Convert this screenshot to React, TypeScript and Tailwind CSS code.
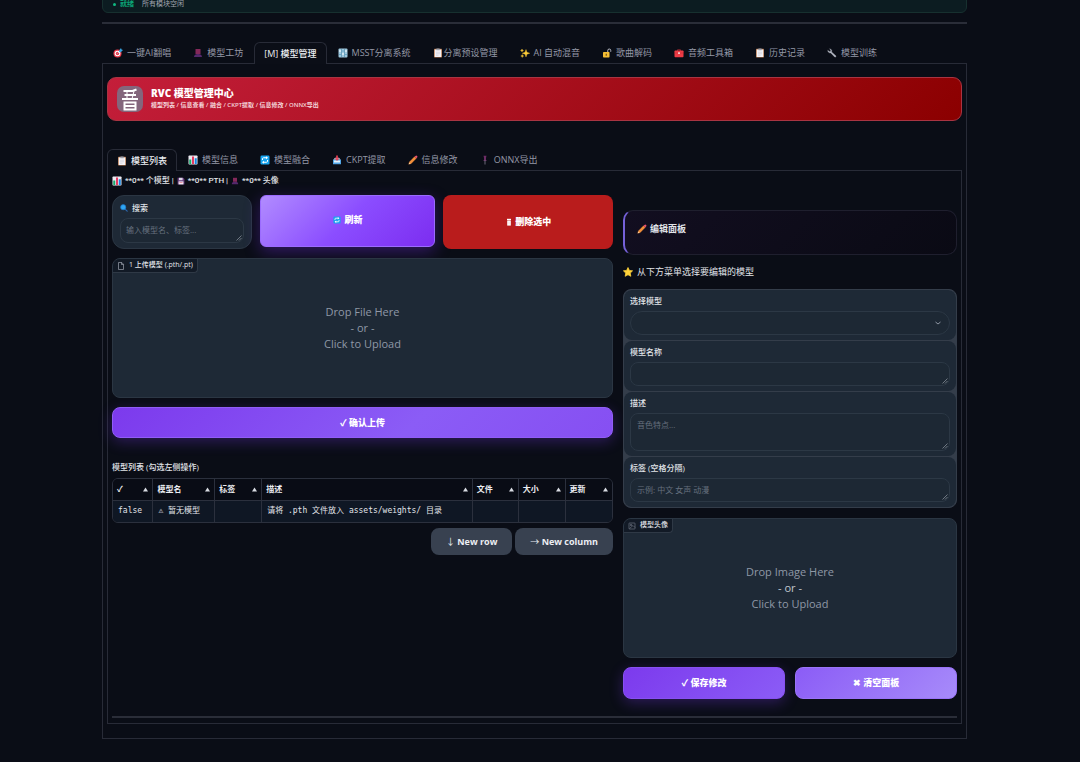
import React from "react";

type IconName =
  | "target" | "bust" | "mixer" | "clipboard" | "sparkles" | "unlock" | "toolbox"
  | "wrench" | "chart" | "refresh" | "inbox" | "pencil" | "pin" | "floppy"
  | "search" | "star" | "trash";

const shapes: Record<IconName, React.ReactNode> = {
  target: (
    <>
      <circle cx="9" cy="11" r="8" fill="#e5384a" />
      <circle cx="9" cy="11" r="5.6" fill="#fff" />
      <circle cx="9" cy="11" r="3.4" fill="#e5384a" />
      <path d="M9 11 16 4" stroke="#c8d4e6" strokeWidth="1.8" />
      <path d="M12 5 16 0l1 3 3 1-4.500 4.500-3-.3z" fill="#38a3e0" />
    </>
  ),
  bust: (
    <>
      <path d="M5 2h10v10H5z" fill="#84285a" />
      <path d="M2 18c0-4 3-6 8-6s8 2 8 6z" fill="#55286c" />
    </>
  ),
  mixer: (
    <>
      <rect x="1" y="1" width="18" height="18" rx="2" fill="#9fc9df" />
      <path d="M7 2v16M13 2v16" stroke="#4c88a8" strokeWidth="1.200" />
      <path d="M2.500 6h3M8.500 12h3M14.500 6h3" stroke="#f4fbff" strokeWidth="3" />
      <path d="M2.500 13h3M8.500 6h3M14.500 13h3" stroke="#5b9cc0" strokeWidth="2" />
    </>
  ),
  clipboard: (
    <>
      <rect x="2" y="1.500" width="16" height="17.500" rx="1.500" fill="#b9794f" />
      <rect x="3.500" y="3" width="13" height="15" fill="#f3f1f5" />
      <rect x="6.500" y="1" width="7" height="3.500" rx="1" fill="#9aa0ad" />
      <path d="M6 8.500h8M6 11.500h8M6 14.500h5" stroke="#c2c2d0" strokeWidth="1" />
    </>
  ),
  sparkles: (
    <path
      d="M12 3l1.900 5.600L19.500 10.500l-5.600 1.900L12 18l-1.900-5.600L4.500 10.500l5.600-1.900zM4 2l.8 2.200L7 5l-2.200.8L4 8l-.8-2.200L1 5l2.200-.8zM4.500 13l.8 2.200 2.200.8-2.200.8-.8 2.200-.8-2.200-2.200-.8 2.200-.8z"
      fill="#fccc38"
      stroke="#fccc38"
      strokeWidth=".7"
    />
  ),
  unlock: (
    <>
      <path d="M11.500 9V5a3 3 0 0 1 6 0V7.500" fill="none" stroke="#c9ccd6" strokeWidth="1.800" />
      <rect x="2" y="8" width="13" height="11" rx="1.500" fill="#f4bd33" />
      <path d="M8.500 11.500v4" stroke="#5c4520" strokeWidth="2.200" />
    </>
  ),
  toolbox: (
    <>
      <path d="M7 6V3.500h6V6" fill="none" stroke="#a52834" strokeWidth="1.600" />
      <rect x="1" y="5" width="18" height="13.500" rx="1.500" fill="#ee3b45" />
      <path d="M1 10h18" stroke="#c92f3a" strokeWidth="1.200" />
      <rect x="8" y="8.500" width="4" height="3.500" fill="#f6c5c8" />
    </>
  ),
  wrench: (
    <path
      d="M7.800 2.300a5 5 0 0 1 1.500 5.600l8.400 7.700a1.700 1.700 0 0 1-2.300 2.400L7.500 9.800A5 5 0 0 1 1.500 4.500l3.200 2.600 2.500-.6.200-2.500L5 1.500z"
      fill="#b3b6c2"
      stroke="#b3b6c2"
      strokeWidth=".6"
    />
  ),
  chart: (
    <>
      <rect x="1" y="1" width="18" height="18" rx="1.500" fill="#eceaf2" />
      <path d="M4.500 18V9" stroke="#16a86b" strokeWidth="4" />
      <path d="M10 18V3" stroke="#e63960" strokeWidth="4" />
      <path d="M15.500 18V6.500" stroke="#1687df" strokeWidth="4" />
    </>
  ),
  refresh: (
    <>
      <rect x="1" y="1" width="18" height="18" rx="2.500" fill="#16a4ef" />
      <path d="M5 10V7.500A2 2 0 0 1 7 5.500h6M15 10v2.500a2 2 0 0 1-2 2H7" fill="none" stroke="#fff" strokeWidth="2" />
      <path d="M12 2.500l4 3-4 3zM8 11.500l-4 3 4 3z" fill="#fff" />
    </>
  ),
  inbox: (
    <>
      <path d="M2 9h16v9.500H2z" fill="#53a6e6" />
      <path d="M3 9 6 5.500h8L17 9z" fill="#c9e4f5" />
      <path d="M4 11h12v4H4z" fill="#e3f2fb" />
      <path d="M10 1v6" stroke="#e93d52" strokeWidth="3.400" />
      <path d="M5.500 6.500h9L10 12z" fill="#e93d52" />
    </>
  ),
  pencil: (
    <>
      <path d="M1.500 18.500l1.200-4.600L12.900 3.700l3.400 3.400L6.100 17.300z" fill="#f4903a" stroke="#f4903a" strokeWidth=".6" />
      <path d="M12.900 3.700l1.900-1.900a2.400 2.400 0 0 1 3.400 3.400l-1.900 1.900z" fill="#e9536e" />
      <path d="M1.500 18.500l.9-3.600 2.700 2.700z" fill="#f6d2a8" />
    </>
  ),
  pin: (
    <>
      <path d="M7 1.500h6l-1 4v4L13.500 12h-7L8 9.500v-4z" fill="#6c2d66" />
      <path d="M10 10v9" stroke="#777383" strokeWidth="1.800" />
    </>
  ),
  floppy: (
    <>
      <path d="M1.500 2h14l3 3v13.500h-17z" fill="#6a3e7e" />
      <rect x="5" y="2" width="9" height="6" fill="#dcd7e8" />
      <rect x="4" y="11" width="12" height="7.500" fill="#f2f0f7" />
      <path d="M6 14h8" stroke="#e04766" strokeWidth="1.500" />
    </>
  ),
  search: (
    <>
      <path d="M12 12l6 6" stroke="#2b65ab" strokeWidth="3" strokeLinecap="round" />
      <circle cx="8" cy="8" r="6.500" fill="#2fa6f2" stroke="#1c73c4" strokeWidth="1.600" />
    </>
  ),
  star: (
    <path
      d="M10 1l2.800 5.900 6.400.8-4.700 4.500 1.200 6.400L10 15.500l-5.700 3.100 1.200-6.400L.8 7.700l6.400-.8z"
      fill="#ffd33a"
      stroke="#ffd33a"
      strokeWidth="1.500"
      strokeLinejoin="round"
    />
  ),
  trash: (
    <>
      <path d="M5 2h10v3H5z" fill="#fff" />
      <path d="M5.500 6h9v13h-9z" fill="#fff" />
      <path d="M10 9v7" stroke="#e8aaaa" strokeWidth="1" />
    </>
  ),
};

function Icon({ name, small }: { name: IconName; small?: boolean }) {
  return (
    <svg viewBox="0 0 20 20" aria-hidden="true" className={small ? "size-2 shrink-0" : "size-2.5 shrink-0"}>
      {shapes[name]}
    </svg>
  );
}

type Tab = { label: string; icon?: IconName; active?: boolean; tight?: boolean };

const mainTabs: Tab[] = [
  { label: "一键AI翻唱", icon: "target" },
  { label: "模型工坊", icon: "bust" },
  { label: "[M] 模型管理", active: true },
  { label: "MSST分离系统", icon: "mixer" },
  { label: "分离预设管理", icon: "clipboard", tight: true },
  { label: "AI 自动混音", icon: "sparkles" },
  { label: "歌曲解码", icon: "unlock" },
  { label: "音频工具箱", icon: "toolbox" },
  { label: "历史记录", icon: "clipboard" },
  { label: "模型训练", icon: "wrench" },
];

const subTabs: Tab[] = [
  { label: "模型列表", icon: "clipboard", active: true },
  { label: "模型信息", icon: "chart" },
  { label: "模型融合", icon: "refresh" },
  { label: "CKPT提取", icon: "inbox" },
  { label: "信息修改", icon: "pencil" },
  { label: "ONNX导出", icon: "pin" },
];

function Tabs({ items }: { items: Tab[] }) {
  return (
    <div role="tablist" className="flex h-[22px] border-b border-[#282b37]">
      {items.map((t) => (
        <button
          key={t.label}
          type="button"
          role="tab"
          aria-selected={!!t.active}
          className={
            t.active
              ? "-mb-px flex h-[22px] shrink-0 items-center gap-1 whitespace-nowrap rounded-t-md border border-b-0 border-[#282b37] bg-[#0b0e17] px-[9px] text-[9px] font-medium text-[#eceef3]"
              : (t.tight ? "gap-px " : "gap-1 ") +
                "flex h-[22px] shrink-0 items-center whitespace-nowrap px-[11px] text-[9px] text-[#9498a6]"
          }
        >
          {t.icon && <Icon name={t.icon} />}
          {t.label}
        </button>
      ))}
    </div>
  );
}

function Grip() {
  return (
    <svg viewBox="0 0 6 6" aria-hidden="true" className="pointer-events-none absolute right-0.5 bottom-0.5 size-1.5">
      <path d="M.5 5.500l5-5M3 5.500l2.500-2.500" stroke="#9299a5" strokeWidth=".7" />
    </svg>
  );
}

function Field({ id, label, placeholder, tall }: { id: string; label: string; placeholder?: string; tall?: boolean }) {
  return (
    <div className="rounded-lg bg-[#1e2936] px-1.5 pt-1.5 pb-[5px]">
      <label htmlFor={id} className="block h-[15px] text-[8px] leading-[10px] font-medium text-[#e2e5ea]">{label}</label>
      <div className="relative">
        <textarea
          id={id}
          placeholder={placeholder}
          className={
            (tall ? "h-[38px] " : "h-6 ") +
            "block w-full resize-none overflow-hidden rounded-lg border border-[#2c3845] bg-[#1d2834] px-1.5 py-[5px] text-[8px] leading-[12px] text-white outline-none placeholder:text-[#66707e]"
          }
        />
        <Grip />
      </div>
    </div>
  );
}

const columns: [string, string][] = [
  ["✓", "w-[8%]"],
  ["模型名", "w-[12.400%]"],
  ["标签", "w-[9.400%]"],
  ["描述", "w-[42.200%]"],
  ["文件", "w-[9.200%]"],
  ["大小", "w-[9.400%]"],
  ["更新", "w-[9.400%]"],
];
const row = ["false", "⚠ 暂无模型", "", "请将 .pth 文件放入 assets/weights/ 目录", "", "", ""];

function ModelTable() {
  return (
    <div className="overflow-hidden rounded-md border border-[#2b303d]">
      <table className="w-full table-fixed border-collapse" aria-labelledby="models-title">
        <thead>
          <tr className="h-[21px] bg-[#090c15]">
            {columns.map(([c, w]) => (
              <th key={c} className={w + " border-l border-[#2b303d] px-1 text-left text-[8px] font-bold text-[#eceef3] first:border-l-0"}>
                <span className="flex items-center justify-between">
                  {c}
                  <svg viewBox="0 0 6 6" className="size-[5px]" aria-hidden="true"><path d="M3 .5 6 5.500H0z" fill="#d9dce3" /></svg>
                </span>
              </th>
            ))}
          </tr>
        </thead>
        <tbody>
          <tr className="h-[22px] border-t border-[#2b303d] bg-[#0f1724]">
            {row.map((c, i) => (
              <td
                key={i}
                className="whitespace-nowrap border-l border-[#2b303d] px-[5px] font-['DejaVu_Sans_Mono','Noto_Sans_CJK_SC',monospace] text-[8px] text-[#e2e5ea] first:border-l-0"
              >
                {c}
              </td>
            ))}
          </tr>
        </tbody>
      </table>
    </div>
  );
}

function DropZone({ kind, label, image }: { kind: string; label: string; image?: boolean }) {
  return (
    <div className="relative flex h-[140px] overflow-hidden rounded-lg border border-[#2b3643] bg-[#1e2936]">
      <div className="absolute top-0 left-0 flex h-3.5 items-center gap-1 rounded-br border-r border-b border-[#2f3946] bg-[#121a26] px-1 text-[7px] font-medium text-[#e2e5ea]">
        {image ? (
          <svg viewBox="0 0 16 16" className="size-2" fill="none" stroke="#8e95a3" aria-hidden="true">
            <rect x="2" y="2" width="12" height="12" rx="1" /><circle cx="6" cy="6" r="1.500" /><path d="M3 13l7-6 4 4" />
          </svg>
        ) : (
          <svg viewBox="0 0 16 16" className="size-2" fill="none" stroke="#a8aebb" strokeWidth="1.300" aria-hidden="true">
            <path d="M3 1h6.500L13 4.500V15H3zM9 1v4h4" />
          </svg>
        )}
        {label}
      </div>
      <button type="button" className="flex-1 text-[11px] leading-4 text-[#8f98a6]">
        Drop {kind} Here
        <span className={image ? "block text-[#c0c6cf]" : "block"}>- or -</span>
        Click to Upload
      </button>
    </div>
  );
}

export default function App() {
  return (
    <div className="min-h-screen overflow-hidden bg-[#0a0d16] pr-[113px] pl-[102px] font-['Open_Sans','Noto_Sans_CJK_SC',sans-serif] text-[9px] text-[#e2e5ea]">
      <div className="-mt-3 flex h-[25px] items-start gap-2 rounded-md border border-[#17302f] bg-[#0c1c21] px-2.5 pt-[9px] text-[7px] leading-[12px] text-[#a0a6b0]">
        <span className="flex items-center gap-1 font-bold text-[#0ba476]">
          <i className="size-[3px] rounded-full bg-[#10b981]" />就绪
        </span>
        <span>所有模块空闲</span>
      </div>
      <hr className="mt-[9px] mb-[18px] border-t-2 border-[#2a2d38]" />

      <Tabs items={mainTabs} />
      <main className="border border-t-0 border-[#282b37] px-1 pt-[13px] pb-3.5">
        <header className="flex h-[44px] items-center gap-2 rounded-[9px] border border-[#a93442] bg-[linear-gradient(135deg,#c41e3a,#8b0000)] px-[9px]">
          <svg viewBox="0 0 26 26" className="size-[26px]" aria-hidden="true">
            <rect width="26" height="26" rx="7" fill="#84667c" />
            <g fill="none" stroke="#fff" strokeWidth="2">
              <path d="M6.500 5h9l4-1.500M7.500 9h11.500M5 13h16M7.500 16.500h11v7h-11zM8 20h10" />
              <path d="M10 5v8M17 5l-2 8" strokeWidth="1" />
            </g>
          </svg>
          <div className="pb-0.5">
            <h1 className="text-[10px] leading-[14px] font-extrabold text-white">RVC 模型管理中心</h1>
            <p className="text-[6px] leading-[11px] font-semibold text-[#f4d5da]">模型列表 / 信息查看 / 融合 / CKPT提取 / 信息修改 / ONNX导出</p>
          </div>
        </header>

        <div className="mt-7">
          <Tabs items={subTabs} />
          <div className="border border-t-0 border-[#282b37] px-1 pt-1 pb-[5px]">
            <p className="flex h-3 items-center gap-[3px] font-['Roboto','Noto_Sans_CJK_SC',sans-serif] text-[8px] font-medium">
              <Icon name="chart" />**0** 个模型 |<Icon name="floppy" small />**0** PTH |<Icon name="bust" small />**0** 头像
            </p>

            <div className="mt-2 grid grid-cols-[3fr_2fr] gap-2.5">
              <section className="flex min-w-0 flex-col">
                <div className="grid h-[54px] grid-cols-[140fr_176fr_170fr] gap-2">
                  <div className="rounded-xl border border-[#2b3643] bg-[#1e2936] px-[7px] pt-1.5">
                    <label htmlFor="search" className="flex h-4 items-start gap-1 text-[8px] leading-[11px] font-medium">
                      <span className="flex h-3 items-center"><Icon name="search" small /></span>搜索
                    </label>
                    <div className="relative">
                      <textarea
                        id="search"
                        placeholder="输入模型名、标签..."
                        className="block h-[25px] w-full resize-none overflow-hidden rounded-lg border border-[#2c3845] bg-[#1d2834] px-[5px] py-[5px] text-[8px] leading-[12px] outline-none placeholder:text-[#66707e]"
                      />
                      <Grip />
                    </div>
                  </div>
                  <button type="button" className="mb-0.5 flex items-center justify-center gap-1 rounded-md border border-[#9b6bff] bg-[linear-gradient(135deg,#b18cff,#8b4dff_50%,#7c2df0)] pb-0.5 text-[9px] font-extrabold text-white shadow-[0_5px_16px_rgba(124,45,240,0.35)]">
                    <Icon name="refresh" small />刷新
                  </button>
                  <button type="button" className="flex items-center justify-center gap-0.5 rounded-lg bg-[#b91c1c] text-[9px] font-extrabold text-white">
                    <Icon name="trash" small />删除选中
                  </button>
                </div>
                <div className="mt-[9px]"><DropZone kind="File" label="1 上传模型 (.pth/.pt)" /></div>
                <button type="button" className="mt-[9px] h-[31px] rounded-lg border border-[#915df7] bg-[linear-gradient(135deg,#7c3aed,#8b5cf6_60%,#864ff2)] text-[9px] font-extrabold text-white shadow-[0_4px_14px_rgba(124,58,237,0.3)]">
                  ✓ 确认上传
                </button>
                <h2 id="models-title" className="mt-[23px] mb-[5px] text-[8px] leading-3 font-medium">模型列表 (勾选左侧操作)</h2>
                <ModelTable />
                <div className="mt-[5px] flex justify-end gap-[3px]">
                  <button type="button" className="h-[27px] rounded-lg bg-[#384150] px-[15px] text-[9px] font-bold text-[#eceef3]">
                    <span className="font-normal">↓</span> New row
                  </button>
                  <button type="button" className="h-[27px] rounded-lg bg-[#384150] px-[15px] text-[9px] font-bold text-[#eceef3]">
                    <span className="font-normal">→</span> New column
                  </button>
                </div>
              </section>

              <section className="flex min-w-0 flex-col pt-[15px]">
                <div className="flex h-[45px] items-start gap-[3px] rounded-[10px] border border-l-2 border-[#1f1f2e] border-l-[#7561d8] bg-[linear-gradient(135deg,#120e20,#0a0a14)] px-3 pt-[11px] text-[9px] leading-[13px] font-bold">
                  <span className="flex h-[13px] items-center"><Icon name="pencil" /></span>编辑面板
                </div>
                <p className="mt-[9px] flex h-4 items-center gap-1 text-[9px]"><Icon name="star" />从下方菜单选择要编辑的模型</p>
                <form className="mt-[9px] flex flex-col gap-px overflow-hidden rounded-lg border border-[#343d4a] bg-[#343d4a]">
                  <div className="rounded-lg bg-[#1e2936] px-1.5 pt-1.5 pb-[5px]">
                    <label htmlFor="model" className="block h-[15px] text-[8px] leading-[10px] font-medium">选择模型</label>
                    <div className="relative">
                      <select id="model" className="block h-6 w-full appearance-none rounded-xl border border-[#2c3845] bg-[#1d2834] px-2 text-[8px] outline-none">
                        <option value=""></option>
                      </select>
                      <svg viewBox="0 0 8 8" className="pointer-events-none absolute top-2 right-2 size-2" fill="none" stroke="#8d95a2" aria-hidden="true">
                        <path d="M1.500 3 4 5l2.500-2" />
                      </svg>
                    </div>
                  </div>
                  <Field id="name" label="模型名称" />
                  <Field id="desc" label="描述" placeholder="音色特点..." tall />
                  <Field id="tags" label="标签 (空格分隔)" placeholder="示例: 中文 女声 动漫" />
                </form>
                <div className="mt-2.5"><DropZone kind="Image" label="模型头像" image /></div>
                <div className="mt-[9px] grid grid-cols-2 gap-2.5">
                  <button type="button" className="h-8 rounded-lg border border-[#8850f2] bg-[linear-gradient(135deg,#7c3aed,#8b5cf6)] text-[9px] font-extrabold text-white shadow-[0_4px_14px_rgba(124,58,237,0.3)]">
                    ✓ 保存修改
                  </button>
                  <button type="button" className="h-8 rounded-lg border border-[#9a73f8] bg-[linear-gradient(135deg,#8b5cf6,#a78bfa)] text-[9px] font-extrabold text-white">
                    ✖ 清空面板
                  </button>
                </div>
              </section>
            </div>
            <hr className="mt-[17px] border-t-2 border-[#2a2d38]" />
          </div>
        </div>
      </main>
    </div>
  );
}
